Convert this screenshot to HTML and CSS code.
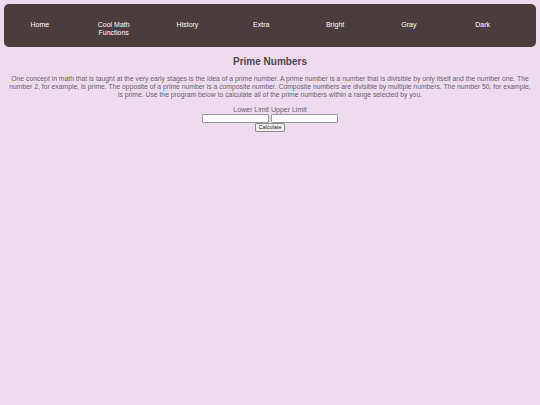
FILE: index.html
```html
<!DOCTYPE html>
<html>
<head>
<meta charset="utf-8">
<title>Prime Numbers</title>
<link rel="stylesheet" href="styles.css">
</head>
<body>
<nav class="topnav">
  <ul class="menu">
    <li><a href="#">Home</a></li>
    <li><a href="#">Cool Math<br>Functions</a></li>
    <li><a href="#">History</a></li>
    <li><a href="#">Extra</a></li>
    <li><a href="#">Bright</a></li>
    <li><a href="#">Gray</a></li>
    <li><a href="#">Dark</a></li>
  </ul>
</nav>
<main class="content">
  <h1 class="title">Prime Numbers</h1>
  <p class="intro">One concept in math that is taught at the very early stages is the idea of a prime number. A prime number is a number that is divisible by only itself and the number one. The number 2, for example, is prime. The opposite of a prime number is a composite number. Composite numbers are divisible by multiple numbers. The number 50, for example, is prime. Use the program below to calculate all of the prime numbers within a range selected by you.</p>
  <form class="calc">
    <div class="labels">Lower Limit Upper Limit</div>
    <div class="fields">
      <input class="field" type="text"><input class="field" type="text">
    </div>
    <button class="btn" type="button">Calculate</button>
  </form>
</main>
</body>
</html>
```

FILE: styles.css
```css
html, body {
  margin: 0;
  padding: 0;
  background: #eddcee;
  font-family: "Liberation Sans", Arial, sans-serif;
}

.topnav {
  margin: 4px 4px 0 4px;
  height: 43px;
  background: #4a3d3d;
  border-radius: 5px;
  box-sizing: border-box;
}

.menu {
  list-style: none;
  margin: 0 0 0 -1px;
  padding: 17px 0 0 0;
  display: grid;
  grid-template-columns: repeat(7, 73.8px);
}

.menu li {
  text-align: center;
  font-size: 7px;
  line-height: 8px;
}

.menu a {
  color: #ffffff;
  text-decoration: none;
}

.content {
  text-align: center;
  padding: 0 6px;
}

.title {
  margin: 9px 0 0 0;
  font-size: 10px;
  line-height: 12px;
  font-weight: bold;
  color: #4f4650;
}

.intro {
  margin: 7px 0 0 0;
  font-size: 6.8px;
  line-height: 8px;
  color: #6a616b;
}

.calc {
  margin-top: 7px;
  display: flex;
  flex-direction: column;
  align-items: center;
}

.labels {
  font-size: 7px;
  line-height: 8px;
  color: #6a616b;
}

.fields {
  display: flex;
  gap: 2px;
}

.field {
  width: 67px;
  height: 9px;
  box-sizing: border-box;
  margin: 0;
  padding: 0;
  border: 1px solid #9a9a9a;
  border-radius: 1px;
  background: #ffffff;
  font-size: 6px;
}

.btn {
  margin: 0;
  height: 9px;
  width: 30px;
  padding: 0;
  font-family: "Liberation Sans", Arial, sans-serif;
  font-size: 5.5px;
  line-height: 7px;
  color: #222;
  background: #efefef;
  border: 1px solid #8a8a8a;
  border-radius: 1px;
}
```
